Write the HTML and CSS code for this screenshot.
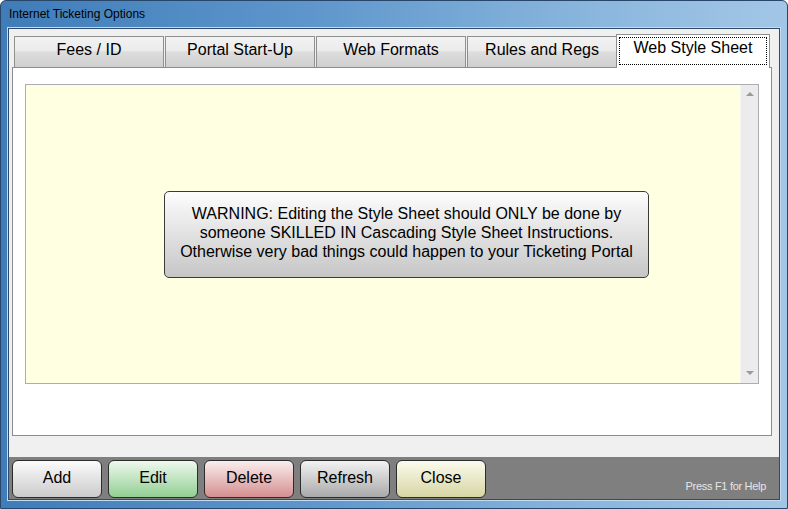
FILE: index.html
```html
<!DOCTYPE html>
<html lang="en">
<head>
    <meta charset="UTF-8">
    <title>Internet Ticketing Options</title>
    <link rel="stylesheet" href="styles.css">
</head>
<body>
    <div class="window">
        <div class="titlebar">Internet Ticketing Options</div>
        <div class="client">
            <div class="tabs">
                <div class="tab">Fees / ID</div>
                <div class="tab">Portal Start-Up</div>
                <div class="tab">Web Formats</div>
                <div class="tab">Rules and Regs</div>
                <div class="tab active"><span class="focus">Web Style Sheet</span></div>
            </div>
            <div class="tab-page">
                <div class="editor">
                    <div class="editor-body">
                        <div class="warning">
                            WARNING: Editing the Style Sheet should ONLY be done by<br>
                            someone SKILLED IN Cascading Style Sheet Instructions.<br>
                            Otherwise very bad things could happen to your Ticketing Portal
                        </div>
                    </div>
                    <div class="scrollbar">
                        <span class="arrow up"></span>
                        <span class="arrow down"></span>
                    </div>
                </div>
            </div>
            <div class="spacer"></div>
            <div class="actions">
                <button class="btn">Add</button>
                <button class="btn edit">Edit</button>
                <button class="btn delete">Delete</button>
                <button class="btn refresh">Refresh</button>
                <button class="btn close">Close</button>
                <span class="help">Press F1 for Help</span>
            </div>
        </div>
    </div>
</body>
</html>
```

FILE: styles.css
```css
body {
    margin: 0;
    font-family: 'Liberation Sans', Arial, sans-serif;
    background: #fff;
}
.window {
    width: 788px;
    height: 509px;
    box-sizing: border-box;
    display: flex;
    flex-direction: column;
    background: linear-gradient(90deg, #3f7cb8 0%, #5f97cc 40%, #8ab6dd 75%, #a3c6e6 100%);
    border: 1px solid #27466a;
    border-radius: 6px 6px 0 0;
    padding: 0 7px 8px 7px;
}
.titlebar {
    height: 27px;
    line-height: 27px;
    font-size: 12px;
    color: #000;
    padding-left: 1px;
    flex-shrink: 0;
}
.client {
    flex: 1;
    display: flex;
    flex-direction: column;
    background: #f0f0f0;
    border: 1px solid #2f4a6a;
    box-shadow: 0 0 0 1px #c4dcf2;
}
.tabs {
    display: flex;
    height: 38px;
    align-items: flex-end;
    padding-left: 5px;
    position: relative;
    z-index: 1;
}
.tab {
    width: 150px;
    height: 31px;
    box-sizing: border-box;
    border: 1px solid #8e8f8f;
    border-bottom: none;
    margin-right: 1px;
    background: linear-gradient(#f2f2f2 0%, #ebebeb 45%, #dddddd 50%, #cfcfcf 100%);
    font-size: 16px;
    text-align: center;
    line-height: 25px;
    color: #000;
}
.tab.active {
    width: 154px;
    height: 34px;
    margin-left: -2px;
    margin-bottom: -1px;
    background: #fff;
    padding: 2px 2px 0;
    line-height: 26px;
}
.focus {
    display: block;
    border: 1px dotted #000;
    height: 28px;
    box-sizing: border-box;
    line-height: 20px;
}
.tab-page {
    height: 369px;
    margin: 0 7px 0 3px;
    box-sizing: border-box;
    background: #fff;
    border: 1px solid #898c95;
    padding: 16px 12px 0 12px;
}
.editor {
    height: 300px;
    box-sizing: border-box;
    border: 1px solid #abadb3;
    background: #ffffe1;
    display: flex;
}
.editor-body {
    flex: 1;
    display: flex;
    align-items: center;
    padding-left: 138px;
}
.warning {
    width: 485px;
    height: 87px;
    box-sizing: border-box;
    border: 1px solid #3a3a3a;
    border-radius: 5px;
    background: linear-gradient(#fdfdfd, #c6c6c6);
    font-size: 16px;
    line-height: 19px;
    text-align: center;
    padding-top: 12px;
    color: #000;
}
.scrollbar {
    width: 17px;
    background: #ececec;
    border-left: 1px solid #f4f4f4;
    display: flex;
    flex-direction: column;
    justify-content: space-between;
    align-items: center;
    padding: 7px 0 8px;
}
.arrow {
    width: 0;
    height: 0;
    border-left: 4px solid transparent;
    border-right: 4px solid transparent;
}
.arrow.up {
    border-bottom: 4px solid #9a9a9a;
}
.arrow.down {
    border-top: 4px solid #9a9a9a;
}
.spacer {
    height: 21px;
}
.actions {
    flex: 1;
    background: #7f7f7f;
    display: flex;
    align-items: flex-start;
    gap: 6px;
    padding: 3px 0 0 3px;
}
.btn {
    width: 90px;
    height: 38px;
    border: 1px solid #2c2c2c;
    border-radius: 6px;
    font-family: 'Liberation Sans', Arial, sans-serif;
    font-size: 16px;
    color: #000;
    background: linear-gradient(#fbfbfb, #cbcbcb);
    padding: 0 0 2px;
}
.btn.edit {
    background: linear-gradient(#eef8ee, #92cf92);
}
.btn.delete {
    background: linear-gradient(#faeeee, #d58f8f);
}
.btn.refresh {
    background: linear-gradient(#f2f2f2, #a9a9a9);
}
.btn.close {
    background: linear-gradient(#fbfbee, #d6d6a3);
}
.help {
    margin-left: auto;
    margin-right: 13px;
    align-self: flex-end;
    margin-bottom: 7px;
    font-size: 11px;
    letter-spacing: -0.3px;
    color: #e6e6e6;
}
```
